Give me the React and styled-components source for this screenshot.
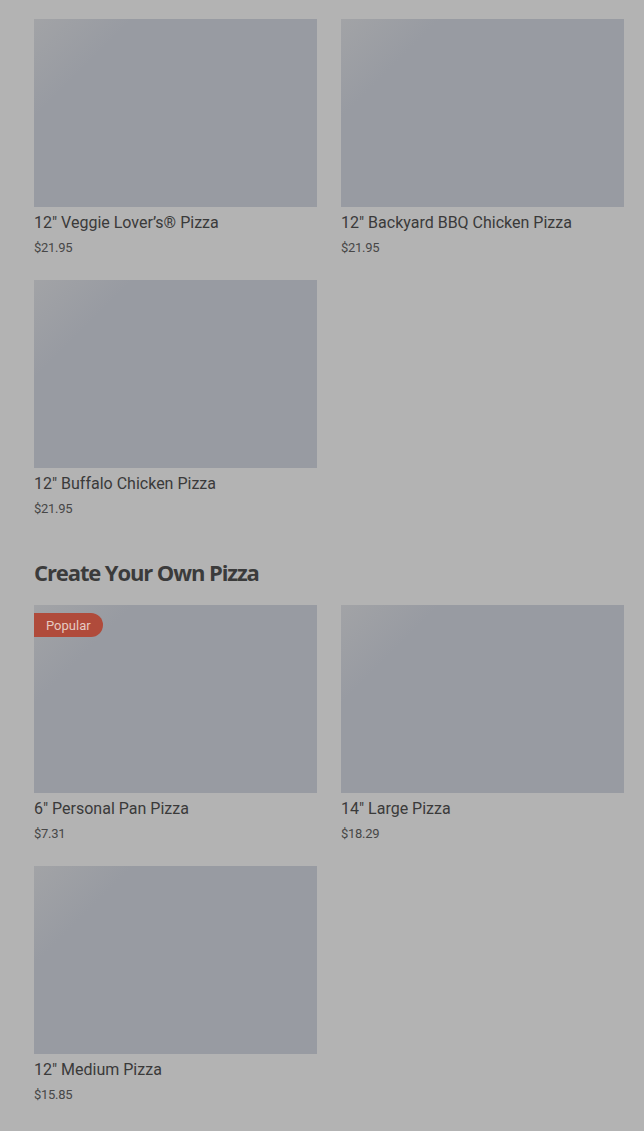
import React from 'react';
import styled, { createGlobalStyle } from 'styled-components';

const GlobalStyle = createGlobalStyle`
    html, body {
        margin: 0;
        padding: 0;
        background: #b3b3b3;
    }
    * {
        box-sizing: border-box;
    }
`;

const Pagina = styled.div`
    background: #b3b3b3;
    min-height: 1131px;
    padding: 19px 20px 20px 34px;
    font-family: Roboto, "Liberation Sans", sans-serif;
    color: #3a3a3a;
`;

const Secao = styled.section`
    margin-bottom: 19px;
`;

const TituloSecao = styled.h2`
    margin: 0 0 19px;
    padding-top: 10px;
    font-family: "Open Sans", "Liberation Sans", sans-serif;
    font-size: 22px;
    font-weight: 700;
    letter-spacing: -1.1px;
    line-height: 28px;
    color: #3b3b3b;
`;

const Grade = styled.div`
    display: grid;
    grid-template-columns: 283px 283px;
    column-gap: 24px;
    row-gap: 12px;
`;

const Cartao = styled.div`
    display: flex;
    flex-direction: column;
    height: 249px;
`;

const Imagem = styled.div`
    position: relative;
    height: 188px;
    background:
        linear-gradient(135deg, rgba(170, 170, 170, 0.55) 0px, rgba(160, 162, 166, 0) 70px),
        #989ba2;
`;

const Selo = styled.span`
    position: absolute;
    top: 8px;
    left: 0;
    height: 24px;
    padding: 0 12px;
    display: flex;
    align-items: center;
    background: #b04b3b;
    color: #e6c9c1;
    font-size: 13px;
    border-radius: 0 12px 12px 0;
`;

const Nome = styled.div`
    margin-top: 6px;
    font-size: 16px;
    line-height: 20px;
    color: #3a3a3a;
`;

const Preco = styled.div`
    margin-top: 7px;
    font-size: 13px;
    line-height: 16px;
    color: #474747;
    letter-spacing: -0.3px;
`;

const pizzas = [
    { nome: '12" Veggie Lover\u2019s\u00AE Pizza', preco: '$21.95' },
    { nome: '12" Backyard BBQ Chicken Pizza', preco: '$21.95' },
    { nome: '12" Buffalo Chicken Pizza', preco: '$21.95' },
];

const montar = [
    { nome: '6" Personal Pan Pizza', preco: '$7.31', popular: true },
    { nome: '14" Large Pizza', preco: '$18.29' },
    { nome: '12" Medium Pizza', preco: '$15.85' },
];

const CartaoPizza = ({ item }) => (
    <Cartao>
        <Imagem>{item.popular && <Selo>Popular</Selo>}</Imagem>
        <Nome>{item.nome}</Nome>
        <Preco>{item.preco}</Preco>
    </Cartao>
);

const App = () => {
    return (
        <>
            <GlobalStyle />
            <Pagina>
                <Secao>
                    <Grade>
                        {pizzas.map((p) => <CartaoPizza key={p.nome} item={p} />)}
                    </Grade>
                </Secao>
                <Secao>
                    <TituloSecao>Create Your Own Pizza</TituloSecao>
                    <Grade>
                        {montar.map((p) => <CartaoPizza key={p.nome} item={p} />)}
                    </Grade>
                </Secao>
            </Pagina>
        </>
    );
};

export default App;
